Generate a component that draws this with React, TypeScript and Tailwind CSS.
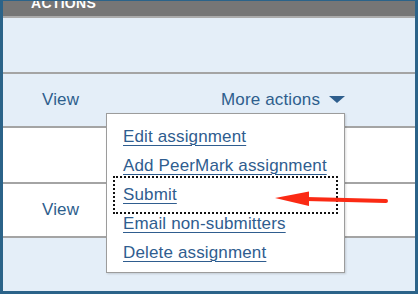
import React from "react";

const menuItems = [
  "Edit assignment",
  "Add PeerMark assignment",
  "Submit",
  "Email non-submitters",
  "Delete assignment",
];

function Row({ tone, h, children }: { tone: "blue" | "white"; h: string; children?: React.ReactNode }) {
  return (
    <div
      className={`${h} flex items-center border-b-2 border-[#a4a4a4] ${
        tone === "blue" ? "bg-[#e4eef8]" : "bg-white"
      }`}
    >
      {children}
    </div>
  );
}

export default function App() {
  return (
    <div
      className="relative w-[418px] h-[294px] overflow-hidden bg-white text-[17px] tracking-[0.15px] text-[#2e5e8d]"
      style={{ fontFamily: '"Liberation Sans", Arial, sans-serif' }}
    >
      <div className="w-[418px] h-[294px] border-t border-x-[3px] border-b-[3px] border-[#2b6389] flex flex-col">
        {/* header */}
        <div className="h-[17px] shrink-0 bg-[#767676] border-b-2 border-[#ababab] overflow-hidden">
          <div className="pl-[28px] -mt-[5px] text-[14px] font-bold text-white leading-[14px] tracking-[0.3px]">
            ACTIONS
          </div>
        </div>

        <Row tone="blue" h="h-[56px] shrink-0" />
        <Row tone="blue" h="h-[54px] shrink-0">
          <span className="pl-[39px] w-[218px]">View</span>
          <span className="flex items-center gap-[9px]">
            More actions
            <svg width="16" height="8" viewBox="0 0 16 8">
              <polygon points="0,0 16,0 8,7" fill="#2e5e8d" />
            </svg>
          </span>
        </Row>
        <Row tone="white" h="h-[56px] shrink-0" />
        <Row tone="white" h="h-[54px] shrink-0">
          <span className="pl-[39px]">View</span>
        </Row>
        <div className="flex-1 bg-[#e4eef8]" />
      </div>

      {/* dropdown menu */}
      <div className="absolute left-[106px] top-[113px] w-[239px] h-[160px] bg-white border border-[#9c9c9c] shadow-[1px_1px_2px_rgba(0,0,0,0.15)] pt-[8px] pl-[16px]">
        {menuItems.map((item) => (
          <div key={item} className="h-[29px] leading-[29px] whitespace-nowrap">
            <a href="#" className="underline decoration-1 underline-offset-[3px] text-[#2f5d8f]">
              {item}
            </a>
          </div>
        ))}
      </div>

      {/* focus highlight */}
      <div className="absolute left-[113px] top-[176px] w-[225px] h-[38px] border-2 border-dotted border-[#111]" />

      {/* red arrow */}
      <svg className="absolute left-0 top-0" width="418" height="294" viewBox="0 0 418 294">
        <polygon points="275,198 309,191.5 309,206" fill="#fb2a14" />
        <path d="M306 199 L386 201" stroke="#fb2a14" strokeWidth="4" strokeLinecap="round" />
      </svg>
    </div>
  );
}
